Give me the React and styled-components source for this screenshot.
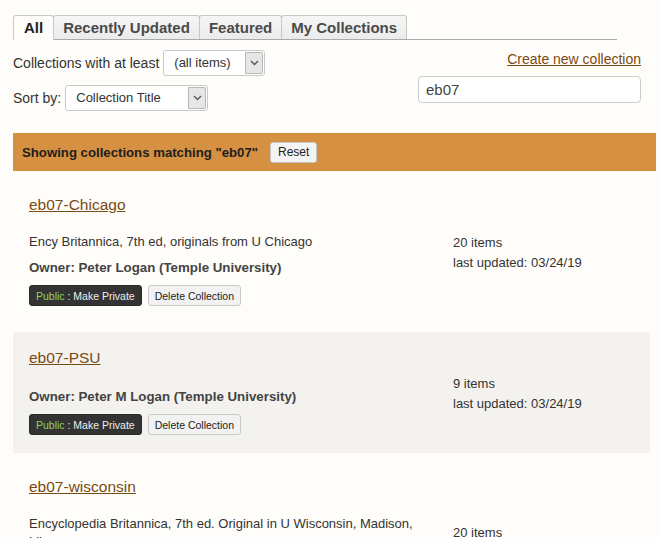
import React, { useState } from 'react';
import styled, { createGlobalStyle } from "styled-components"

const GlobalStyle = createGlobalStyle`
  html, body {
    margin: 0;
    background: #fffdf9;
    font-family: "Liberation Sans", Arial, sans-serif;
    color: #333;
  }
`

const collections = [
  {
    title: 'eb07-Chicago',
    description: 'Ency Britannica, 7th ed, originals from U Chicago',
    owner: 'Peter Logan (Temple University)',
    count: '20 items',
    updated: '03/24/19',
    statsOffset: 0,
  },
  {
    title: 'eb07-PSU',
    owner: 'Peter M Logan (Temple University)',
    count: '9 items',
    updated: '03/24/19',
    statsOffset: -12,
    shaded: true,
  },
  {
    title: 'eb07-wisconsin',
    description: 'Encyclopedia Britannica, 7th ed. Original in U Wisconsin, Madison, Library',
    owner: 'Peter Logan (Temple University)',
    count: '20 items',
    updated: '03/24/19',
    statsOffset: 8,
  },
]

const tabs = ['All', 'Recently Updated', 'Featured', 'My Collections']

const Chevron = () => (
  <svg width="9" height="6" viewBox="0 0 9 6">
    <path d="M1 1 L4.5 4.5 L8 1" fill="none" stroke="#555" strokeWidth="1.3" />
  </svg>
)

const FakeSelect = ({ width, value }) => (
  <SelectBox $width={width}>
    <span className='value'>{value}</span>
    <span className='arrow'><Chevron /></span>
  </SelectBox>
)

const App = () => {
  const [active, setActive] = useState(0)
  const [query, setQuery] = useState('eb07')

  return (
    <Page>
      <GlobalStyle />
      <TabBar>
        {tabs.map((t, i) => (
          <Tab key={t} $active={i === active} onClick={() => setActive(i)}>{t}</Tab>
        ))}
      </TabBar>

      <Controls>
        <Filters>
          <FilterRow>
            Collections with at least
            <FakeSelect width={102} value="(all items)" />
          </FilterRow>
          <FilterRow>
            Sort by:
            <FakeSelect width={143} value="Collection Title" />
          </FilterRow>
        </Filters>
        <SearchSide>
          <CreateLink href="#">Create new collection</CreateLink>
          <SearchInput value={query} onChange={(e) => setQuery(e.target.value)} />
        </SearchSide>
      </Controls>

      <Banner>
        Showing collections matching "{query}"
        <ResetButton onClick={() => setQuery('')}>Reset</ResetButton>
      </Banner>

      <List>
        {collections.map((c) => (
          <Item key={c.title} $shaded={c.shaded}>
            <ItemTitle href="#">{c.title}</ItemTitle>
            <ItemBody>
              <div className='left'>
                {c.description && <Description>{c.description}</Description>}
                <Owner $first={!c.description}>Owner: {c.owner}</Owner>
                <Actions>
                  <PrivacyButton><span className='state'>Public</span> : Make Private</PrivacyButton>
                  <DeleteButton>Delete Collection</DeleteButton>
                </Actions>
              </div>
              <Stats $offset={c.statsOffset}>
                <div>{c.count}</div>
                <div>last updated: {c.updated}</div>
              </Stats>
            </ItemBody>
          </Item>
        ))}
      </List>
    </Page>
  );
};

export default App;


const Page = styled.div`
    padding: 14px 0 0 13px;
    width: 643px;
`

const TabBar = styled.div`
    display: flex;
    align-items: flex-end;
    width: 604px;
    height: 25px;
    border-bottom: 1px solid #aaa;
`

const Tab = styled.div`
    height: ${p => p.$active ? '25px' : '24px'};
    box-sizing: border-box;
    padding: 0 9px;
    line-height: 23px;
    font-size: 15px;
    font-weight: bold;
    color: ${p => p.$active ? '#222' : '#4a4a4a'};
    background: ${p => p.$active ? '#fffdf9' : 'linear-gradient(#f6f6f6, #ebebeb)'};
    border: 1px solid #c8c8c8;
    border-bottom: none;
    border-radius: 3px 3px 0 0;
    margin-bottom: ${p => p.$active ? '-1px' : '0'};
    margin-right: -1px;
    cursor: pointer;
    &:first-child {
        padding: 0 10px;
    }
`

const Controls = styled.div`
    display: flex;
    justify-content: space-between;
    width: 628px;
    margin-top: 10px;
`

const Filters = styled.div`
    display: flex;
    flex-direction: column;
    gap: 9px;
`

const FilterRow = styled.div`
    display: flex;
    align-items: center;
    gap: 4px;
    font-size: 14px;
    color: #333;
`

const SelectBox = styled.div`
    width: ${p => p.$width}px;
    height: 26px;
    box-sizing: border-box;
    display: flex;
    align-items: stretch;
    border: 1px solid #c9c9c9;
    border-radius: 3px;
    background: #fff;
    .value {
        flex: 1;
        padding-left: 10px;
        font-size: 13px;
        line-height: 24px;
        color: #333;
    }
    .arrow {
        width: 16px;
        margin: 1px;
        display: flex;
        align-items: center;
        justify-content: center;
        background: #e6e6e6;
        border: 1px solid #b8b8b8;
        border-radius: 0 2px 2px 0;
    }
`

const SearchSide = styled.div`
    display: flex;
    flex-direction: column;
    align-items: flex-end;
    width: 223px;
`

const CreateLink = styled.a`
    font-size: 14px;
    color: #7a4a14;
    text-decoration: underline;
    line-height: 18px;
`

const SearchInput = styled.input`
    margin-top: 8px;
    width: 223px;
    height: 27px;
    box-sizing: border-box;
    border: 1px solid #cccccc;
    border-radius: 4px;
    padding: 0 7px;
    font-family: "Liberation Sans", Arial, sans-serif;
    font-size: 15px;
    color: #444;
    background: #fff;
    outline: none;
`

const Banner = styled.div`
    margin-top: 22px;
    width: 643px;
    height: 38px;
    box-sizing: border-box;
    background: #d69041;
    display: flex;
    align-items: center;
    padding-left: 9px;
    font-size: 13.2px;
    font-weight: bold;
    color: #1e1e1e;
`

const ResetButton = styled.button`
    margin-left: 12px;
    height: 21px;
    padding: 0 7px;
    font-family: "Liberation Sans", Arial, sans-serif;
    font-size: 12px;
    color: #222;
    background: #f4f4f4;
    border: 1px solid #c6c6c6;
    border-radius: 3px;
    cursor: pointer;
`

const List = styled.div`
    margin-top: 8px;
    display: flex;
    flex-direction: column;
    gap: 8px;
`

const Item = styled.div`
    width: 637px;
    box-sizing: border-box;
    padding: 14px 16px 18px;
    background: ${p => p.$shaded ? '#f3f2ef' : 'transparent'};
`

const ItemTitle = styled.a`
    display: inline-block;
    font-size: 15.5px;
    line-height: 23px;
    color: #7a4a14;
    text-decoration: underline;
`

const ItemBody = styled.div`
    display: grid;
    grid-template-columns: 410px 1fr;
    column-gap: 14px;
    margin-top: 17px;
`

const Description = styled.div`
    font-size: 13px;
    line-height: 18px;
    color: #333;
    margin-bottom: 7px;
`

const Owner = styled.div`
    font-size: 13.3px;
    font-weight: bold;
    line-height: 20px;
    color: #444;
    margin-top: ${p => p.$first ? '1px' : '0'};
`

const Actions = styled.div`
    display: flex;
    gap: 6px;
    margin-top: 7px;
`

const PrivacyButton = styled.button`
    height: 21px;
    padding: 0 6px;
    font-family: "Liberation Sans", Arial, sans-serif;
    font-size: 10.5px;
    color: #eee;
    background: #333;
    border: 1px solid #2a2a2a;
    border-radius: 3px;
    .state {
        color: #8fd65c;
    }
`

const DeleteButton = styled.button`
    height: 21px;
    padding: 0 6px;
    font-family: "Liberation Sans", Arial, sans-serif;
    font-size: 10.5px;
    color: #222;
    background: #f2f2f2;
    border: 1px solid #c8c8c8;
    border-radius: 3px;
`

const Stats = styled.div`
    margin-top: ${p => p.$offset}px;
    font-size: 13px;
    line-height: 20px;
    color: #333;
`
